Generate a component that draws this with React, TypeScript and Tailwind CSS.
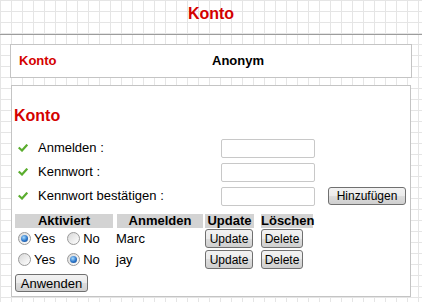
import React from "react";

const btn =
  "border border-[#707070] rounded-[3px] bg-[linear-gradient(#f2f2f2_0%,#ebebeb_50%,#dddddd_50%,#cfcfcf_100%)] text-[12px] leading-none text-black flex items-center justify-center";

function Check() {
  return (
    <svg width="10" height="8" viewBox="0 0 10 8" className="shrink-0">
      <path d="M1.5 4.2 L4 6.5 L8.5 1.5" fill="none" stroke="#5aad2e" strokeWidth="2.2" strokeLinecap="square" strokeLinejoin="miter" />
    </svg>
  );
}

function Radio({ on }: { on?: boolean }) {
  return (
    <span className="w-[13px] h-[13px] rounded-full border border-[#9a9a9a] bg-[linear-gradient(135deg,#d8d8d8,#ffffff)] flex items-center justify-center shrink-0">
      {on && (
        <span className="w-[7px] h-[7px] rounded-full bg-[radial-gradient(circle_at_40%_35%,#a8dcff,#2a74c8_55%,#123f80_100%)]" />
      )}
    </span>
  );
}

function FormRow({ label, button }: { label: string; button?: boolean }) {
  return (
    <div className="flex items-center h-[24px] pl-[6px]">
      <div className="w-[203px] flex items-center">
        <Check />
        <span className="ml-[10px] text-[13px]">{label}</span>
      </div>
      <div className="w-[94px] h-[19px] border border-[#c8c8c8] rounded-[2px] bg-white" />
      {button && <div className={`${btn} ml-[13px] w-[78px] h-[18px]`}>Hinzufügen</div>}
    </div>
  );
}

function DataRow({ yes, name }: { yes: boolean; name: string }) {
  return (
    <div className="flex items-center h-[21px]">
      <div className="w-[98px] flex items-center text-[13px]">
        <span className="ml-[3px]"><Radio on={yes} /></span>
        <span className="ml-[3px]">Yes</span>
        <span className="ml-[12px]"><Radio on={!yes} /></span>
        <span className="ml-[3px]">No</span>
      </div>
      <div className="w-[86px] ml-[3px] text-[13px]">{name}</div>
      <div className={`${btn} ml-[3px] w-[48px] h-[19px]`}>Update</div>
      <div className={`${btn} ml-[8px] w-[42px] h-[19px]`}>Delete</div>
    </div>
  );
}

export default function App() {
  return (
    <div className="min-h-screen w-full font-['Liberation_Sans',Arial,sans-serif] text-black bg-white bg-[linear-gradient(#e5e5e5_1px,transparent_1px),linear-gradient(90deg,#e5e5e5_1px,transparent_1px)] bg-[size:11px_11px] pb-[5px]">
      <div className="h-[35px] border-b border-[#9c9c9c] flex justify-center pt-[4px]">
        <h1 className="text-[16px] leading-[20px] font-bold text-[#d40000]">Konto</h1>
      </div>
      <div className="mx-[10px] mt-[9px] h-[34px] border border-[#c4c4c4] bg-white grid grid-cols-2 items-center text-[13px] font-bold">
        <div className="pl-[8px] text-[#d40000]">Konto</div>
        <div className="pl-[1px]">Anonym</div>
      </div>
      <div className="ml-[11px] mr-[11px] mt-[7px] h-[212px] border border-[#c4c4c4] bg-white pt-[20px]">
        <h2 className="pl-[2px] text-[16px] leading-[20px] font-bold text-[#d40000]">Konto</h2>
        <div className="mt-[10px]">
          <FormRow label="Anmelden :" />
          <FormRow label="Kennwort :" />
          <FormRow label="Kennwort bestätigen :" button />
        </div>
        <div className="pl-[3px] mt-[6px]">
          <div className="flex h-[14px] text-[13px] font-bold leading-[14px]">
            <div className="w-[98px] bg-[#d3d3d3] text-center">Aktiviert</div>
            <div className="w-[86px] ml-[4px] bg-[#d3d3d3] text-center">Anmelden</div>
            <div className="w-[49px] ml-[2px] bg-[#d3d3d3] text-center">Update</div>
            <div className="w-[52px] ml-[7px] bg-[#d3d3d3] text-center">Löschen</div>
          </div>
          <DataRow yes name="Marc" />
          <DataRow yes={false} name="jay" />
          <div className={`${btn} mt-[4px] w-[73px] h-[18px] text-[13px]`}>Anwenden</div>
        </div>
      </div>
    </div>
  );
}
